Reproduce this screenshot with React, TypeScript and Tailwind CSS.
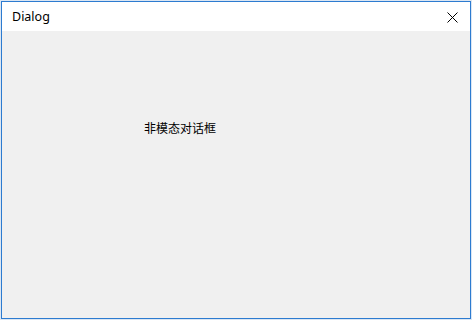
export default function App() {
  return (
    <div className="w-[472px] h-[320px] border border-[#dbe6f3] bg-white">
      <div className="w-full h-full flex flex-col border border-[#2d7bd0]">
        <div className="h-[29px] shrink-0 bg-white flex items-center justify-between pl-[10px] pr-[12px]">
          <span className="text-[12.5px] text-black leading-none pt-[1px]" style={{ fontFamily: '"Segoe UI", "Noto Sans", "Liberation Sans", sans-serif' }}>
            Dialog
          </span>
          <svg width="11" height="11" viewBox="0 0 11 11" className="mt-[1px]">
            <path d="M0.5 0.5 L10.5 10.5 M10.5 0.5 L0.5 10.5" stroke="#000" strokeWidth="1" fill="none" />
          </svg>
        </div>
        <div className="flex-1 bg-[#f0f0f0] pl-[142px] pt-[84px]">
          <span className="text-[12px] text-black leading-none" style={{ fontFamily: '"Noto Sans CJK SC", "Noto Sans CJK JP", sans-serif' }}>
            非模态对话框
          </span>
        </div>
      </div>
    </div>
  );
}
